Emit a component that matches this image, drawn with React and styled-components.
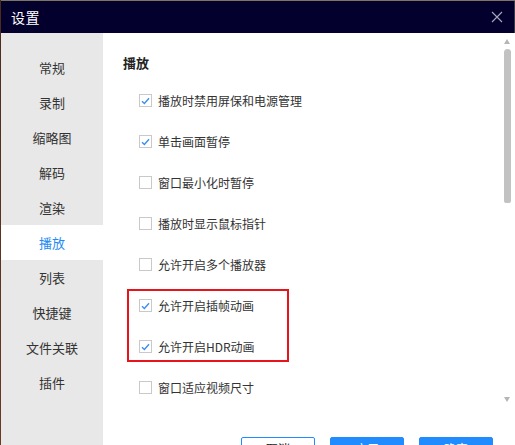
import React from "react";
import styled, { createGlobalStyle } from "styled-components";

const Global = createGlobalStyle`
  html, body { margin: 0; padding: 0; }
  body {
    background: #4a2c1c;
    font-family: "Noto Sans CJK SC", "Noto Sans", sans-serif;
    overflow: hidden;
  }
`;

const Page = styled.div`
  width: 515px;
  height: 445px;
  overflow: hidden;
  background: linear-gradient(#4a2c1c, #6a3a24);
`;

const Dialog = styled.div`
  margin: 0 0 0 1px;
  width: 514px;
  border-top: 1px solid #7c7562;
  background: #fff;
`;

const TitleBar = styled.div`
  height: 32px;
  background: #04002d;
  display: flex;
  align-items: center;
  justify-content: space-between;
  padding: 0 11px 0 10px;
  box-sizing: border-box;
  border-right: 1px solid #3a3a4a;
`;

const Title = styled.span`
  color: #fff;
  font-size: 14px;
  letter-spacing: 0.5px;
`;

const CloseBtn = styled.span`
  display: flex;
  width: 12px;
  height: 12px;
`;

const Body = styled.div`
  display: flex;
  height: 440px;
`;

const Sidebar = styled.div`
  width: 102px;
  background: #e8e8e8;
  padding-top: 17px;
  box-sizing: border-box;
  display: flex;
  flex-direction: column;
`;

const NavItem = styled.div`
  height: 35px;
  flex: none;
  display: flex;
  align-items: center;
  justify-content: center;
  font-size: 13px;
  color: ${(p) => (p.$active ? "#1f8cf5" : "#333")};
  background: ${(p) => (p.$active ? "#fff" : "transparent")};
`;

const Panel = styled.div`
  flex: 1;
  display: flex;
  flex-direction: column;
`;

const ScrollArea = styled.div`
  height: 376px;
  flex: none;
  display: flex;
  overflow: hidden;
`;

const Main = styled.div`
  flex: 1;
  padding: 20px 0 0 20px;
`;

const Heading = styled.div`
  font-size: 13px;
  font-weight: bold;
  color: #222;
  line-height: 20px;
  height: 20px;
`;

const List = styled.div`
  margin-top: 7px;
  display: flex;
  flex-direction: column;
`;

const Highlight = styled.div`
  position: relative;
  display: flex;
  flex-direction: column;
  &::after {
    content: "";
    position: absolute;
    left: 4px;
    top: 4px;
    width: 162px;
    height: 73px;
    box-sizing: border-box;
    border: 2px solid #e8141c;
    pointer-events: none;
  }
`;

const Row = styled.label`
  height: 41px;
  flex: none;
  display: flex;
  align-items: center;
  padding-left: 16px;
  gap: 6px;
  font-size: 12px;
  color: #333;
`;

const Box = styled.span`
  width: 13px;
  height: 13px;
  box-sizing: border-box;
  border: 1px solid #c9c9c9;
  background: #fff;
  display: flex;
  align-items: center;
  justify-content: center;
  flex: none;
`;

const ScrollBar = styled.div`
  width: 8px;
  margin: 0 4px 0 0;
  padding: 6px 0 7px;
  display: flex;
  flex-direction: column;
  align-items: center;
`;

const Arrow = styled.div`
  width: 0;
  height: 0;
  border-left: 3.5px solid transparent;
  border-right: 3.5px solid transparent;
  ${(p) =>
    p.$down
      ? "border-top: 5px solid #b5b5b5;"
      : "border-bottom: 5px solid #b5b5b5;"}
`;

const Thumb = styled.div`
  margin-top: 5px;
  width: 7px;
  height: 154px;
  background: #c2c2c2;
  border-radius: 4px 4px 3px 3px;
`;

const Spacer = styled.div`
  flex: 1;
`;

const Footer = styled.div`
  display: flex;
  justify-content: flex-end;
  gap: 15px;
  padding: 28px 22px 0 0;
`;

const Button = styled.button`
  width: 74px;
  height: 23px;
  border-radius: 2px;
  font-family: inherit;
  font-size: 12px;
  padding: 0;
  border: 1px solid #208cff;
  background: ${(p) => (p.$primary ? "#208cff" : "#fff")};
  color: ${(p) => (p.$primary ? "#fff" : "#222")};
`;

const Check = ({ checked }) => (
  <Box>
    {checked && (
      <svg width="9" height="8" viewBox="0 0 9 8">
        <path d="M1 4.2 L3.4 6.4 L8 1.3" fill="none" stroke="#3a8ef2" strokeWidth="1.4" />
      </svg>
    )}
  </Box>
);

const nav = ["常规", "录制", "缩略图", "解码", "渲染", "播放", "列表", "快捷键", "文件关联", "插件"];

const before = [
  ["播放时禁用屏保和电源管理", true],
  ["单击画面暂停", true],
  ["窗口最小化时暂停", false],
  ["播放时显示鼠标指针", false],
  ["允许开启多个播放器", false],
];
const marked = [
  ["允许开启插帧动画", true],
  ["允许开启HDR动画", true],
];
const after = [["窗口适应视频尺寸", false]];

const Item = ({ label, checked }) => (
  <Row>
    <Check checked={checked} />
    <span>{label}</span>
  </Row>
);

export default function App() {
  return (
    <Page>
      <Global />
      <Dialog>
        <TitleBar>
          <Title>设置</Title>
          <CloseBtn>
            <svg width="12" height="12" viewBox="0 0 12 12">
              <path d="M1 1 L11 11 M11 1 L1 11" stroke="#a9a9bb" strokeWidth="1.1" />
            </svg>
          </CloseBtn>
        </TitleBar>
        <Body>
          <Sidebar>
            {nav.map((n) => (
              <NavItem key={n} $active={n === "播放"}>
                {n}
              </NavItem>
            ))}
          </Sidebar>
          <Panel>
            <ScrollArea>
              <Main>
                <Heading>播放</Heading>
                <List>
                  {before.map(([l, c]) => (
                    <Item key={l} label={l} checked={c} />
                  ))}
                  <Highlight>
                    {marked.map(([l, c]) => (
                      <Item key={l} label={l} checked={c} />
                    ))}
                  </Highlight>
                  {after.map(([l, c]) => (
                    <Item key={l} label={l} checked={c} />
                  ))}
                </List>
              </Main>
              <ScrollBar>
                <Arrow />
                <Thumb />
                <Spacer />
                <Arrow $down />
              </ScrollBar>
            </ScrollArea>
            <Footer>
              <Button>取消</Button>
              <Button $primary>应用</Button>
              <Button $primary>确定</Button>
            </Footer>
          </Panel>
        </Body>
      </Dialog>
    </Page>
  );
}
